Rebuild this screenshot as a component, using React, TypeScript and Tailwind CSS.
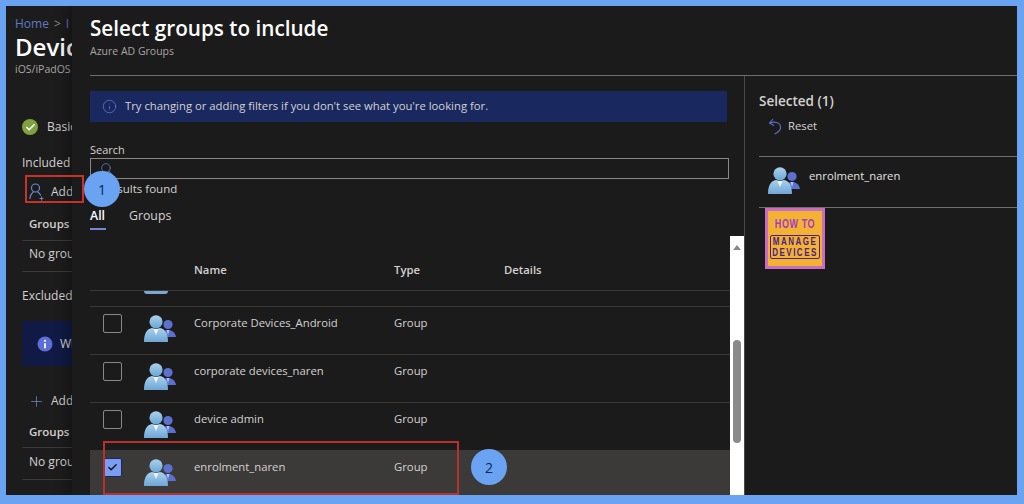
import { Check, Info, Plus, Search } from "lucide-react";

const GroupIcon = () => (
    <svg width="32" height="28" viewBox="0 0 32 28" className="shrink-0">
        <defs>
            <linearGradient id="front" x1="0" y1="0" x2="0" y2="1">
                <stop offset="0" stopColor="#a9d2ec" />
                <stop offset="1" stopColor="#6fa6d6" />
            </linearGradient>
        </defs>
        <circle cx="24" cy="9.5" r="4.6" fill="#5c70cf" />
        <path d="M17 22c1-5 3-7 7-7s7 2 8 7z" fill="#5c70cf" />
        <path d="M22.5 15h3L24 20z" fill="#b9c4ee" />
        <circle cx="12" cy="6.8" r="6.6" fill="url(#front)" />
        <path d="M0 27c0-9 3-13 8-14l4 1 4-1c5 1 8 5 8 14z" fill="url(#front)" />
        <path d="M9.5 14h5L12 20z" fill="#eef6fb" />
    </svg>
);

const AddUserIcon = () => (
    <svg width="16" height="18" viewBox="0 0 16 18" fill="none" stroke="#6d8ed8" strokeWidth="1.1" className="shrink-0">
        <circle cx="6.5" cy="5" r="4" />
        <path d="M1 16c0-4 2-6 3.5-7M8.500 9c1.500 .7 2.700 2 3.200 3.500" />
        <path d="M12.500 13.500v4M10.500 15.500h4" strokeWidth="0.9" />
    </svg>
);

const ResetIcon = () => (
    <svg width="14" height="17" viewBox="0 0 14 17" fill="none" stroke="#5f6fc4" strokeWidth="1.1" className="shrink-0">
        <path d="M1.500 5C6 3 12 4.500 12.500 8.500 13 12 10 14.500 6.500 16" />
        <path d="M5 1 1.500 5l4.500 2.500" />
    </svg>
);

const FilledInfo = () => (
    <svg width="16" height="16" viewBox="0 0 16 16" className="shrink-0">
        <circle cx="8" cy="8" r="7.500" fill="#5d6fd6" />
        <circle cx="8" cy="4.800" r="1.100" fill="#fff" />
        <path d="M8 7.200v5" stroke="#fff" strokeWidth="1.800" />
    </svg>
);

const rows = [
    { name: "Corporate Devices_Android" },
    { name: "corporate devices_naren" },
    { name: "device admin" },
];

const LeftColumn = () => (
    <div className="w-[66px] shrink-0 overflow-hidden whitespace-nowrap bg-[#1c1c1c] text-[12px] text-[#d4d2d0]">
        <div className="mt-[10px] flex h-4 items-center gap-[5px] pl-[9px] text-[#5f78c8]">
            Home <span className="text-[#8a8886]">&gt;</span> I
        </div>
        <div className="h-[30px] pl-[9px] text-[24px] leading-[30px] font-semibold text-white">Device</div>
        <div className="h-[14px] pl-[9px] text-[10.5px] leading-[14px] text-[#a8a6a4]">iOS/iPadOS</div>
        <div className="mt-[41px] flex h-5 items-center gap-[9px] pl-[16px]">
            <span className="flex h-4 w-4 shrink-0 items-center justify-center rounded-full bg-[#7ea23f]">
                <Check size={11} strokeWidth={3.5} className="text-white" />
            </span>
            Basics
        </div>
        <div className="mt-[18px] h-4 pl-[16px] leading-4">Included</div>
        <div className="mt-[11px] flex h-5 items-center gap-[6px] pl-[23px]">
            <AddUserIcon />
            Add
        </div>
        <div className="mt-[13px] ml-[16px] h-[26px] border-b border-[#3b3a39] pl-[7px] text-[11.5px] font-semibold">Groups</div>
        <div className="ml-[16px] flex h-[31px] items-center border-b border-[#3b3a39] pb-[4px] pl-[7px]">No groups</div>
        <div className="mt-[15px] h-[18px] pl-[16px] leading-[18px]">Excluded</div>
        <div className="mt-[16px] ml-[16px] flex h-[45px] items-center gap-[7px] bg-[#101a44] pl-[15px]">
            <FilledInfo />
            When
        </div>
        <div className="mt-[25px] flex h-5 items-center gap-[6px] pl-[22px]">
            <Plus size={17} strokeWidth={1} className="shrink-0 text-[#6d8ed8]" />
            Add
        </div>
        <div className="mt-[12px] ml-[16px] h-[25px] border-b border-[#3b3a39] pl-[7px] text-[11.5px] font-semibold">Groups</div>
        <div className="ml-[16px] flex h-[32px] items-center border-b border-[#3b3a39] pb-[4px] pl-[7px]">No groups</div>
    </div>
);

export default function App() {
    return (
        <div className="relative h-[504px] w-[1024px] overflow-hidden bg-[#6aa3f2] pt-[6px] pr-[7px] pb-[9px] pl-[6px] font-['Open_Sans',sans-serif]">
            <div className="flex h-full overflow-hidden bg-[#1b1b1b]">
                <LeftColumn />

                {/* Blade */}
                <div className="flex min-w-0 flex-1 flex-col pl-[18px] text-[#d4d2d0] shadow-[-6px_0_10px_rgba(0,0,0,0.25)]">
                    <div className="mt-[7px] h-[31px] text-[20.7px] leading-[30px] font-semibold text-white">Select groups to include</div>
                    <div className="h-[14px] text-[10.5px] leading-[14px] text-[#a8a6a4]">Azure AD Groups</div>
                    <div className="mt-[17px] border-t border-[#6f6e6d]" />

                    <div className="flex min-h-0 flex-1">
                        {/* Results */}
                        <div className="flex w-[654px] shrink-0 flex-col">
                            <div className="mt-[15px] mr-[17px] flex h-[31px] items-center gap-[8px] bg-[#1a2860] pl-[12px] text-[11.3px] text-[#d4d2d0]">
                                <Info size={15} strokeWidth={1} className="text-[#6f8be0]" />
                                Try changing or adding filters if you don't see what you're looking for.
                            </div>
                            <div className="mt-[19px] h-[17px] text-[11px] leading-[17px]">Search</div>
                            <div className="mr-[15px] flex h-[21px] items-start border border-[#8a8886] pt-[3px] pl-[9px]">
                                <Search size={13} strokeWidth={1.2} className="text-[#6d8ed8]" />
                            </div>
                            <div className="mt-[1px] h-[18px] text-[11.5px] leading-[18px]">16 results found</div>
                            <div className="mt-[8px] flex h-[24px] gap-[23px] text-[12.3px] leading-[20px]">
                                <div className="h-[24px] w-[16px] border-b-2 border-[#7186d6] font-semibold text-white">All</div>
                                <div>Groups</div>
                            </div>

                            {/* Table */}
                            <div className="mt-[5px] flex min-h-0 flex-1">
                                <div className="flex min-w-0 flex-1 flex-col text-[11.3px]">
                                    <div className="flex h-[56px] shrink-0 items-center border-b border-[#3b3a39] pt-[16px] font-semibold">
                                        <div className="w-[104px] shrink-0" />
                                        <div className="w-[200px] shrink-0">Name</div>
                                        <div className="w-[110px] shrink-0">Type</div>
                                        <div>Details</div>
                                    </div>
                                    <div className="h-[16px] shrink-0 overflow-hidden border-b border-[#3b3a39] pl-[54px]">
                                        <div className="h-[3px] w-[24px] rounded-b bg-[#7ba9cf]" />
                                    </div>
                                    {rows.map((row) => (
                                        <div key={row.name} className="flex h-[48px] shrink-0 border-b border-[#3b3a39] pt-[8px]">
                                            <div className="-mt-[1px] ml-[13px] h-[19px] w-[19px] shrink-0 rounded-[2px] border border-[#8a8886]" />
                                            <div className="ml-[22px] shrink-0"><GroupIcon /></div>
                                            <div className="ml-[18px] w-[200px] shrink-0">{row.name}</div>
                                            <div>Group</div>
                                        </div>
                                    ))}
                                    <div className="flex min-h-0 flex-1 bg-[#3b3a39] pt-[8px]">
                                        <div className="-mt-[1px] ml-[13px] flex h-[19px] w-[19px] shrink-0 items-center justify-center rounded-[2px] border border-[#1a2860] bg-[#7b9cf0]">
                                            <Check size={11} strokeWidth={3} className="text-[#111]" />
                                        </div>
                                        <div className="ml-[22px] shrink-0"><GroupIcon /></div>
                                        <div className="ml-[18px] w-[200px] shrink-0">enrolment_naren</div>
                                        <div>Group</div>
                                    </div>
                                </div>

                                {/* Scrollbar */}
                                <div className="mt-[1px] flex w-[14px] shrink-0 flex-col items-center bg-white pt-[9px]">
                                    <div className="h-0 w-0 border-x-[4px] border-b-[5px] border-x-transparent border-b-[#8a8886]" />
                                    <div className="mt-[90px] h-[103px] w-[8px] rounded-full bg-[#8a8a8a]" />
                                </div>
                            </div>
                        </div>

                        {/* Selected */}
                        <div className="min-w-0 flex-1 border-l border-[#4a4948] pl-[14px]">
                            <div className="mt-[15px] h-[20px] text-[13.5px] leading-[20px] font-semibold">Selected (1)</div>
                            <div className="mt-[5px] flex h-[20px] items-center gap-[6px] pl-[9px] text-[11.3px]">
                                <ResetIcon />
                                Reset
                            </div>
                            <div className="mt-[20px] flex h-[52px] border-y border-[#6f6e6d] pt-[10px] pl-[9px] text-[11.3px]">
                                <GroupIcon />
                                <span className="mt-[1px] ml-[9px] font-medium text-[#e4e2e0]">enrolment_naren</span>
                            </div>
                            <div className="ml-[6px] flex h-[61px] w-[60px] flex-col items-center bg-[#c86cc4] p-[3px]">
                                <div className="flex h-full w-full flex-col items-center bg-[#f4b233] pt-[9px] font-['Liberation_Sans',sans-serif] leading-none font-bold">
                                    <div className="scale-y-[1.5] text-[9px] tracking-[0.6px] text-[#a63cc4]">HOW TO</div>
                                    <div className="mt-[6px] w-[50px] rounded-[2px] border border-[#4a1f86] text-center text-[8px] leading-[11px] tracking-[1.5px] text-[#4a1f86]">
                                        <div className="scale-y-[1.3]">MANAGE</div>
                                        <div className="scale-y-[1.3]">DEVICES</div>
                                    </div>
                                </div>
                            </div>
                        </div>
                    </div>
                </div>
            </div>

            {/* Annotations */}
            <div className="absolute top-[175px] left-[25px] h-[28px] w-[59px] border-2 border-[#c8322b]" />
            <div className="absolute top-[441px] left-[103px] h-[54px] w-[356px] border-2 border-[#b8312b]" />
            <div className="absolute top-[171px] left-[84px] flex h-9 w-9 items-center justify-center rounded-full bg-[#6aa3f2] text-[14px] text-[#10284f]">1</div>
            <div className="absolute top-[449px] left-[471px] flex h-9 w-9 items-center justify-center rounded-full bg-[#6aa3f2] text-[14px] text-[#10284f]">2</div>
        </div>
    );
}
